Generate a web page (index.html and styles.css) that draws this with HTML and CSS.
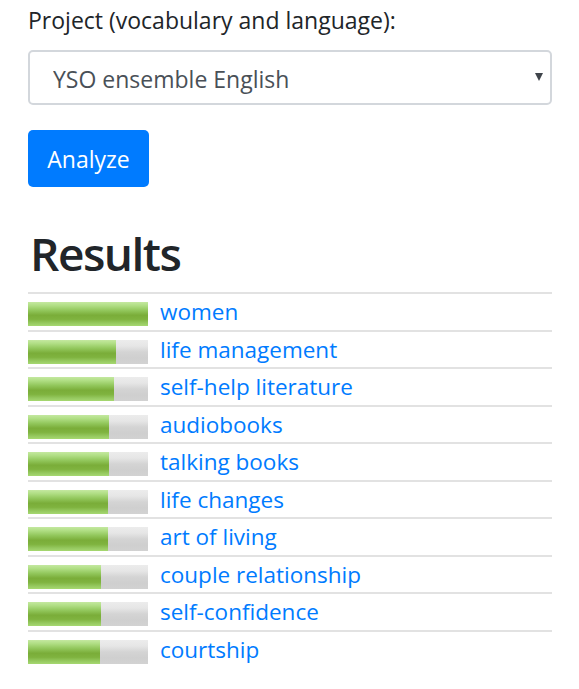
FILE: index.html
```html
<!DOCTYPE html>
<html lang="en">
<head>
<meta charset="utf-8">
<title>Annif</title>
<link rel="stylesheet" href="styles.css">
</head>
<body>
<main class="page">
  <form class="form">
    <label class="label" for="project">Project (vocabulary and language):</label>
    <div class="select-wrap">
      <select id="project" class="select">
        <option>YSO ensemble English</option>
      </select>
      <span class="caret"></span>
    </div>
    <button type="button" class="btn">Analyze</button>
  </form>
  <h1 class="heading">Results</h1>
  <ul class="results">
    <li class="row"><span class="bar"><span class="fill" style="width:120px"></span></span><a href="#" class="term">women</a></li>
    <li class="row"><span class="bar"><span class="fill" style="width:88px"></span></span><a href="#" class="term">life management</a></li>
    <li class="row"><span class="bar"><span class="fill" style="width:86px"></span></span><a href="#" class="term">self-help literature</a></li>
    <li class="row"><span class="bar"><span class="fill" style="width:81px"></span></span><a href="#" class="term">audiobooks</a></li>
    <li class="row"><span class="bar"><span class="fill" style="width:81px"></span></span><a href="#" class="term">talking books</a></li>
    <li class="row"><span class="bar"><span class="fill" style="width:80px"></span></span><a href="#" class="term">life changes</a></li>
    <li class="row"><span class="bar"><span class="fill" style="width:80px"></span></span><a href="#" class="term">art of living</a></li>
    <li class="row"><span class="bar"><span class="fill" style="width:73px"></span></span><a href="#" class="term">couple relationship</a></li>
    <li class="row"><span class="bar"><span class="fill" style="width:73px"></span></span><a href="#" class="term">self-confidence</a></li>
    <li class="row"><span class="bar"><span class="fill" style="width:72px"></span></span><a href="#" class="term">courtship</a></li>
  </ul>
</main>
</body>
</html>
```
FILE: styles.css
```css
* { box-sizing: border-box; }
html, body { margin: 0; padding: 0; background: #fff; }
body {
  font-family: "Open Sans", "Noto Sans", "DejaVu Sans", sans-serif;
  color: #212529;
}
.page { padding: 0 27px 0 28px; }
.form { display: flex; flex-direction: column; align-items: flex-start; }
.label {
  display: block;
  font-size: 23px;
  line-height: 32px;
  padding-top: 4px;
  margin-bottom: 14px;
}
.select-wrap { position: relative; width: 100%; }
.select {
  -webkit-appearance: none;
  appearance: none;
  display: block;
  width: 100%;
  height: 55px;
  padding: 3px 25px 0 23px;
  font-family: inherit;
  font-size: 23px;
  color: #495057;
  background: #fff;
  border: 2px solid #d3d7dc;
  border-radius: 5px;
}
.caret {
  position: absolute;
  right: 9px;
  top: 23px;
  width: 0; height: 0;
  border-left: 4.5px solid transparent;
  border-right: 4.5px solid transparent;
  border-top: 8.5px solid #40454b;
}
.btn {
  margin-top: 25px;
  width: 121px;
  height: 57px;
  background: #007bff;
  color: #fff;
  border: none;
  border-radius: 5px;
  font-family: inherit;
  font-size: 23px;
  padding: 1px 0 0;
}
.heading {
  margin: 38px 0 0 0;
  font-size: 46px;
  font-weight: 600;
  letter-spacing: -1.5px;
  line-height: 56px;
  padding-left: 2px;
}
.results {
  list-style: none;
  margin: 11px 0 0 0;
  padding: 0;
}
.row {
  display: flex;
  align-items: center;
  gap: 12px;
  border-top: 2px solid #e2e2e2;
  padding: 8px 0 3.5px;
}
.bar {
  display: block;
  width: 120px;
  height: 24px;
  flex: none;
  background: linear-gradient(to bottom, #ececec 0%, #e6e6e6 25%, #d4d4d4 50%, #cfcfcf 75%, #d2d2d2 100%);
}
.fill {
  display: block;
  height: 100%;
  background: linear-gradient(to bottom, #c4e8a0 0%, #b0de84 15%, #92c75c 35%, #7aad39 55%, #7fb33f 72%, #96c960 88%, #a6d871 100%);
}
.term {
  color: #007bff;
  text-decoration: none;
  font-size: 22.5px;
  line-height: 24px;
  margin-top: -4px;
}
```
